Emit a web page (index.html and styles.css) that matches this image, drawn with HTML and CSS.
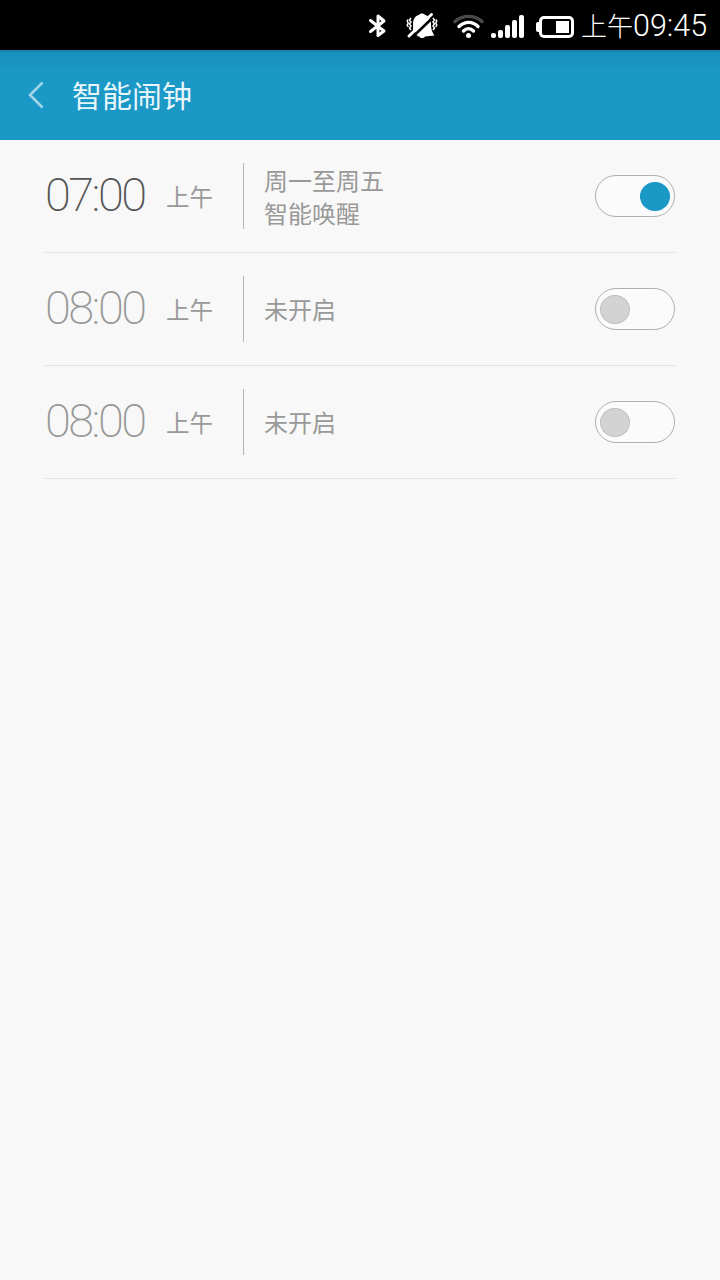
FILE: index.html
```html
<!DOCTYPE html>
<html lang="zh-CN">
<head>
    <meta charset="utf-8">
    <title>智能闹钟</title>
    <link rel="stylesheet" href="styles.css">
</head>
<body>
    <div class="status-bar">
        <svg class="bluetooth" width="20" height="26" viewBox="0 0 20 26">
            <path d="M3.500 7.500L17 18L11 22.500V3L17 8L3.500 18.500" />
        </svg>
        <svg class="mute" width="32" height="28" viewBox="0 0 32 28">
            <path class="fill" d="M6.500 19C7.500 16 7 14 7 11C7.500 6 10 3.500 13 3C14 1 18 1 19 3C22.500 3.500 24.500 7 25 11C25 16 25.500 19 28.500 23.500L19 24.500C18 26.500 14 26.500 13.500 24.500L5 24Z" />
            <path class="blank" d="M0 18H8L12 25L10 27H1Z" />
            <path class="line" d="M3 24L25.500 2.500" />
            <path class="cut" d="M5 26.500L28.500 4" />
            <path class="wave" d="M5 6L3.500 8L5 10L3.500 12L5 14L3.500 16L5 18M2 7.500L1.200 9L2.200 11L1.200 13L2.200 15M27 6L28.500 8L27 10L28.500 12L27 14L28.500 16L27 18M30 7.500L30.800 9L29.800 11L30.800 13L29.800 15" />
        </svg>
        <svg class="wifi" width="32" height="26" viewBox="0 0 32 26">
            <path class="weak" d="M2 8.500C9.500 1.700 21.500 1.700 29 8.500" />
            <path d="M6 13.500C12 8 19.500 8 25 13.500M10.500 18C13.500 15 17.500 15 20.500 18" />
            <circle cx="15.500" cy="22.500" r="2.500" />
        </svg>
        <svg class="signal" width="34" height="26" viewBox="0 0 34 26">
            <rect x="0" y="20" width="5" height="5" rx="2" />
            <rect x="7" y="17" width="5" height="8" rx="2" />
            <rect x="14" y="12" width="5" height="13" rx="2" />
            <rect x="21" y="7" width="5" height="18" rx="2" />
            <rect x="28" y="2" width="5" height="23" rx="2" />
        </svg>
        <svg class="battery" width="39" height="24" viewBox="0 0 39 24">
            <rect class="case" x="4.500" y="2.500" width="32" height="19" rx="3.500" />
            <rect x="0" y="7" width="5" height="10" rx="2" />
            <rect x="20" y="6" width="13" height="12" />
        </svg>
        <span class="clock"><span class="period">上午</span>09:45</span>
    </div>

    <div class="header">
        <svg class="back" width="16" height="28" viewBox="0 0 16 28">
            <path d="M14.500 1.500L2 14L14.500 26.500" />
        </svg>
        <h1>智能闹钟</h1>
    </div>

    <div class="alarms">
        <div class="alarm on">
            <span class="time">07:00</span>
            <span class="ampm">上午</span>
            <div class="info">周一至周五<br>智能唤醒</div>
            <div class="switch"><div class="knob"></div></div>
        </div>
        <div class="alarm">
            <span class="time">08:00</span>
            <span class="ampm">上午</span>
            <div class="info">未开启</div>
            <div class="switch"><div class="knob"></div></div>
        </div>
        <div class="alarm">
            <span class="time">08:00</span>
            <span class="ampm">上午</span>
            <div class="info">未开启</div>
            <div class="switch"><div class="knob"></div></div>
        </div>
    </div>
</body>
</html>
```
FILE: styles.css
```css
body {
    margin: 0;
    background-color: #f8f8f8;
    font-family: Roboto, "Noto Sans CJK SC", sans-serif;
}
svg {
    display: block;
    flex: none;
}

/* status bar */
.status-bar {
    display: flex;
    align-items: center;
    box-sizing: border-box;
    height: 50px;
    padding-top: 2px;
    padding-left: 367px;
    background-color: #000;
    color: #fff;
    overflow: hidden;
}
.status-bar svg {
    fill: #fff;
}
.bluetooth path {
    fill: none;
    stroke: #fff;
    stroke-width: 3;
    stroke-linejoin: round;
    stroke-linecap: round;
}
.mute {
    margin-left: 19px;
}
.mute .blank {
    fill: #000;
}
.mute .cut {
    stroke: #000;
    stroke-width: 2.500px;
}
.mute .line {
    stroke: #fff;
    stroke-width: 3;
    stroke-linecap: round;
}
.mute .wave {
    fill: none;
    stroke: #fff;
    stroke-width: 1.500px;
}
.wifi {
    margin-left: 15px;
}
.wifi path {
    fill: none;
    stroke: #fff;
    stroke-width: 3.400px;
    stroke-linecap: round;
}
.wifi .weak {
    stroke: #4a4a4a;
}
.signal {
    margin-left: 6px;
}
.battery {
    margin-left: 11px;
    padding-top: 1px;
}
.battery .case {
    fill: none;
    stroke: #fff;
    stroke-width: 3;
}
.clock {
    margin-left: 6px;
    padding-top: 1px;
    font-size: 30.500px;
    font-weight: 300;
    line-height: 48px;
    white-space: nowrap;
}
.period {
    font-size: 26px;
}

/* title bar */
.header {
    display: flex;
    align-items: center;
    height: 90px;
    padding-left: 28px;
    background: linear-gradient(#177fa6 0, #1a91be 3px, #1a98c6 20px);
    color: #e8f5fa;
}
.back path {
    fill: none;
    stroke: #a3d6e8;
    stroke-width: 2.500px;
}
h1 {
    margin: 0 0 0 28px;
    padding-top: 3px;
    font-size: 30px;
    font-weight: 400;
    line-height: 87px;
}

/* alarm list */
.alarms {
    padding: 0 45px;
}
.alarm {
    display: flex;
    align-items: center;
    height: 112px;
    border-bottom: 1px solid #e2e2e2;
    color: #999;
}
.time {
    width: 121px;
    padding-bottom: 3px;
    font-size: 47px;
    font-weight: 200;
    letter-spacing: -2.600px;
    line-height: 62px;
}
.on .time {
    color: #555;
}
.ampm {
    width: 77px;
    font-size: 23.500px;
}
.info {
    display: flex;
    flex-direction: column;
    justify-content: center;
    box-sizing: border-box;
    height: 66px;
    padding-top: 5px;
    padding-left: 20px;
    border-left: 1px solid #b5b5b5;
    font-size: 24px;
    line-height: 33px;
}
.switch {
    display: flex;
    box-sizing: border-box;
    width: 80px;
    height: 42px;
    margin-left: auto;
    padding: 6px 4px 4px;
    border: 1px solid #b0b0b0;
    border-radius: 21px;
    background-color: #fbfbfb;
}
.knob {
    box-sizing: border-box;
    width: 30px;
    height: 29px;
    border: 1px solid #c0c0c0;
    border-radius: 50%;
    background-color: #d3d3d3;
}
.on .switch {
    justify-content: flex-end;
}
.on .knob {
    border-color: #1a98c6;
    background-color: #1a98c6;
}
```
